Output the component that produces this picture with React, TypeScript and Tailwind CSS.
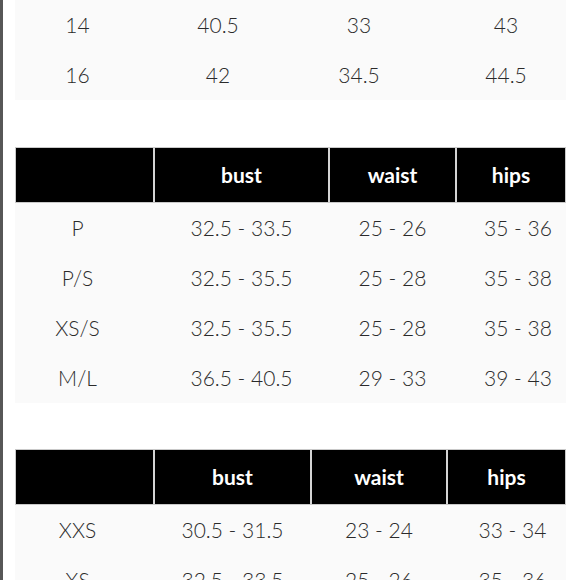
const font = { fontFamily: '"Lato", "Open Sans", sans-serif' };

type Row = string[];

function Header({ cols, labels }: { cols: string; labels: string[] }) {
  return (
    <div className={`grid ${cols} h-[56px] gap-x-[2px] border border-[#c9c9c9] bg-[#d4d4d4]`}>
      {labels.map((l, i) => (
        <div
          key={i}
          className="flex items-center justify-center bg-black text-[21px] font-bold text-white"
        >
          {l}
        </div>
      ))}
    </div>
  );
}

function Body({ cols, rows, shifts }: { cols: string; rows: Row[]; shifts: string[] }) {
  return (
    <div className="bg-[#fafafa]">
      {rows.map((r, i) => (
        <div key={i} className={`grid ${cols} h-[50px] items-center gap-x-[2px] px-[1px]`}>
          {r.map((c, j) => (
            <div
              key={j}
              className={`text-center text-[21px] font-light text-[#2a2a2a] ${shifts[j]}`}
            >
              {c}
            </div>
          ))}
        </div>
      ))}
    </div>
  );
}

export default function App() {
  const topCols = "grid-cols-[123px_154px_124px_142px]";
  const cols1 = "grid-cols-[137px_173px_125px_108px]";
  const cols2 = "grid-cols-[137px_155px_134px_117px]";

  return (
    <div className="flex h-[580px] w-[580px] overflow-hidden bg-white" style={font}>
      <div className="h-full w-[3px] shrink-0 bg-[#575757]" />
      <div className="ml-[12px] flex w-[551px] shrink-0 flex-col">
        <Body
          cols={topCols}
          rows={[
            ["14", "40.5", "33", "43"],
            ["16", "42", "34.5", "44.5"],
          ]}
          shifts={["", "", "", "pl-[24px]"]}
        />

        <div className="mt-[47px]">
          <Header cols={cols1} labels={["", "bust", "waist", "hips"]} />
          <Body
            cols={cols1}
            rows={[
              ["P", "32.5 - 33.5", "25 - 26", "35 - 36"],
              ["P/S", "32.5 - 35.5", "25 - 28", "35 - 38"],
              ["XS/S", "32.5 - 35.5", "25 - 28", "35 - 38"],
              ["M/L", "36.5 - 40.5", "29 - 33", "39 - 43"],
            ]}
            shifts={["pr-[14px]", "", "", "pl-[14px]"]}
          />
        </div>

        <div className="mt-[46px]">
          <Header cols={cols2} labels={["", "bust", "waist", "hips"]} />
          <Body
            cols={cols2}
            rows={[
              ["XXS", "30.5 - 31.5", "23 - 24", "33 - 34"],
              ["XS", "32.5 - 33.5", "25 - 26", "35 - 36"],
            ]}
            shifts={["pr-[14px]", "", "", "pl-[12px]"]}
          />
        </div>
      </div>
    </div>
  );
}
